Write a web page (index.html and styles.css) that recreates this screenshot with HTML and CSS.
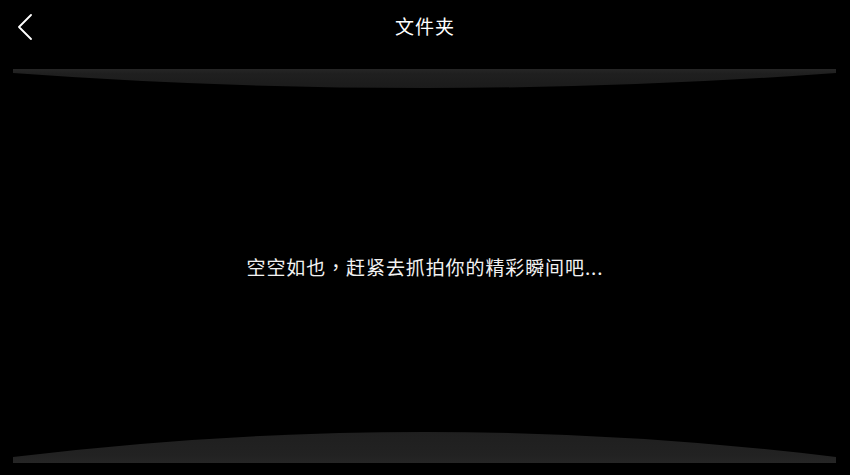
FILE: index.html
```html
<!DOCTYPE html>
<html lang="zh-CN">
<head>
<meta charset="utf-8">
<title>文件夹</title>
<link rel="stylesheet" href="styles.css">
</head>
<body>
<div class="page">
  <header class="header">
    <div class="back">
      <svg class="back-icon" viewBox="0 0 16 26" width="16" height="26">
        <polyline points="14,1 2,13 14,25" fill="none" stroke="#fff" stroke-width="1.8" stroke-linecap="round" stroke-linejoin="round"/>
      </svg>
    </div>
    <h1 class="title">文件夹</h1>
    <div class="spacer"></div>
  </header>
  <svg class="band band-top" viewBox="0 0 823 20" preserveAspectRatio="none">
    <defs>
      <linearGradient id="gt" x1="0" y1="0" x2="0" y2="1">
        <stop offset="0" stop-color="#262626"/>
        <stop offset="0.25" stop-color="#1f1f1f"/>
        <stop offset="1" stop-color="#1b1b1b"/>
      </linearGradient>
    </defs>
    <path d="M0,0 H823 V4 Q411.5,34 0,4 Z" fill="url(#gt)"/>
  </svg>
  <main class="content">
    <p class="empty">空空如也<span class="comma" lang="zh-TW">，</span>赶紧去抓拍你的精彩瞬间吧...</p>
  </main>
  <svg class="band band-bottom" viewBox="0 0 823 31" preserveAspectRatio="none">
    <defs>
      <linearGradient id="gb" x1="0" y1="0" x2="0" y2="1">
        <stop offset="0" stop-color="#1f1f1f"/>
        <stop offset="0.75" stop-color="#222222"/>
        <stop offset="1" stop-color="#262626"/>
      </linearGradient>
    </defs>
    <path d="M0,31 H823 V25 Q411.5,-25 0,25 Z" fill="url(#gb)"/>
  </svg>
</div>
</body>
</html>
```
FILE: styles.css
```css
html, body {
  margin: 0;
  padding: 0;
  background: #000;
}
body {
  font-family: "Noto Sans CJK SC", "Noto Sans", sans-serif;
  color: #fff;
}
.page {
  width: 850px;
  height: 475px;
  display: flex;
  flex-direction: column;
  overflow: hidden;
}
.header {
  height: 54px;
  display: grid;
  grid-template-columns: 1fr auto 1fr;
  align-items: center;
}
.back {
  padding-left: 17px;
  display: flex;
  align-items: center;
}
.back-icon {
  display: block;
}
.title {
  margin: 0 0 4px;
  font-size: 19px;
  font-weight: 400;
  letter-spacing: 1px;
  color: #fff;
}
.band {
  display: block;
  margin: 0 14px 0 13px;
  width: 823px;
}
.band-top {
  height: 20px;
  margin-top: 15px;
}
.band-bottom {
  height: 31px;
  margin-bottom: 12px;
}
.content {
  flex: 1;
  display: flex;
  align-items: center;
  justify-content: center;
  padding-top: 11px;
}
.empty {
  margin: 0;
  font-size: 19px;
  color: #f2f2f2;
  letter-spacing: 0.9px;
}
.comma {
  font-family: "Noto Sans CJK TC", "Noto Sans CJK SC", sans-serif;
}
```
